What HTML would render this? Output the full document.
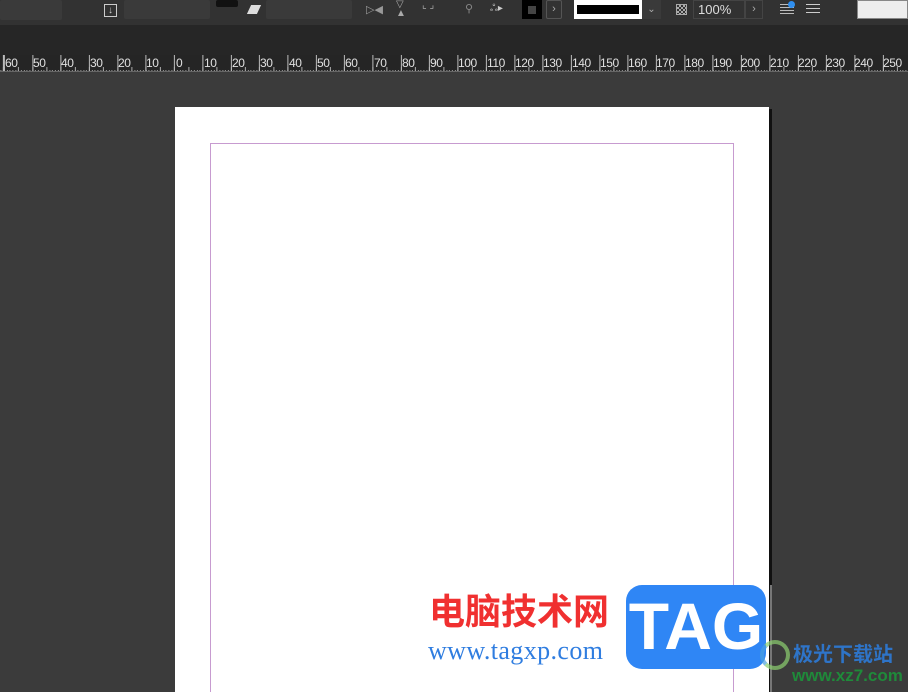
<!DOCTYPE html>
<html style="overflow:hidden;width:908px;height:692px"><head><meta charset="utf-8"><style>
*{margin:0;padding:0;box-sizing:border-box}
body{width:908px;height:692px;overflow:hidden;background:#3b3b3b;font-family:"Liberation Sans",sans-serif;position:relative}
.tb{position:absolute;left:0;top:0;width:908px;height:25px;background:#323232}
.band{position:absolute;left:0;top:25px;width:908px;height:30px;background:#262626}
.ruler{position:absolute;left:0;top:55px;width:908px;height:17px;background:#252525;border-bottom:1px solid #666;
background-image:
repeating-linear-gradient(90deg,#bbb 0 1px,transparent 1px 28.35px),
repeating-linear-gradient(90deg,#aaa 0 1px,transparent 1px 14.175px),
repeating-linear-gradient(90deg,#999 0 1px,transparent 1px 2.835px);
background-size:100% 17px,100% 5px,100% 2px;background-position:3.9px 0,3.9px 12px,3.9px 15px;background-repeat:repeat-x}
.ruler span{position:absolute;top:1px;font-size:12px;color:#e0e0e0;letter-spacing:-0.4px}
.c{position:absolute;background:#3a3a3a;border-radius:2px}
.page{position:absolute;left:175px;top:107px;width:594px;height:585px;background:#fff}
.sh{position:absolute;left:769px;top:109px;width:3px;height:583px;background:#111}
.m{position:absolute;left:210px;top:143px;width:524px;height:549px;border:1px solid #c79bd0;border-bottom:none}
</style></head><body>
<div class="tb">
<div class="c" style="left:0;top:0;width:62px;height:20px;background:#3a3a3a"></div>
<div style="position:absolute;left:104px;top:4px;width:13px;height:13px;border:1px solid #ccc;color:#ccc;font-size:10px;line-height:11px;text-align:center">↓</div>
<div class="c" style="left:124px;top:0;width:86px;height:19px"></div>
<div class="c" style="left:216px;top:0;width:22px;height:7px;background:#111"></div>
<div style="position:absolute;left:249px;top:5px;width:10px;height:9px;background:#ddd;transform:skewX(-25deg)"></div>
<div class="c" style="left:266px;top:0;width:86px;height:19px"></div>
<div style="position:absolute;left:366px;top:3px;color:#999;font-size:11px">▷◀</div>
<div style="position:absolute;left:396px;top:0px;color:#aaa;font-size:10px;line-height:9px">▽<br>▲</div>
<div style="position:absolute;left:422px;top:0;color:#aaa;font-size:10px">⌞ ⌟</div>
<div style="position:absolute;left:465px;top:2px;color:#888;font-size:11px">⚲</div>
<div style="position:absolute;left:490px;top:3px;color:#ccc;font-size:10px">ஃ▸</div>
<div style="position:absolute;left:522px;top:0;width:20px;height:19px;background:#000"><div style="margin:6px;width:8px;height:8px;background:#444"></div></div>
<div style="position:absolute;left:546px;top:0;width:16px;height:19px;border:1px solid #555;border-radius:2px;color:#aaa;font-size:11px;text-align:center;line-height:17px">›</div>
<div style="position:absolute;left:574px;top:0;width:68px;height:19px;background:#fff"><div style="margin:5px 3px;height:9px;background:#000"></div></div>
<div style="position:absolute;left:642px;top:0;width:19px;height:19px;background:#3a3a3a;color:#aaa;font-size:10px;text-align:center;line-height:19px">⌄</div>
<div style="position:absolute;left:676px;top:4px;width:11px;height:11px;border:1px solid #aaa;background:repeating-conic-gradient(#aaa 0 25%,#333 0 50%) 0 0/4px 4px"></div>
<div style="position:absolute;left:693px;top:0;width:52px;height:19px;border:1px solid #444;color:#ddd;font-size:13px;line-height:18px;padding-left:4px">100%</div>
<div style="position:absolute;left:745px;top:0;width:18px;height:19px;border:1px solid #444;color:#aaa;font-size:11px;text-align:center;line-height:17px">›</div>
<div style="position:absolute;left:780px;top:4px;width:14px;height:10px;background:repeating-linear-gradient(#bbb 0 1px,transparent 1px 3px)"></div>
<div style="position:absolute;left:788px;top:1px;width:7px;height:7px;border-radius:50%;background:#2f8ff0"></div>
<div style="position:absolute;left:806px;top:4px;width:14px;height:11px;background:repeating-linear-gradient(#ccc 0 1px,transparent 1px 4px)"></div>
<div style="position:absolute;left:857px;top:0;width:51px;height:19px;background:#eee;border:1px solid #888"></div>
</div>
<div class="band"></div>
<div class="ruler">
<span style="left:5px">60</span><span style="left:33px">50</span><span style="left:61px">40</span><span style="left:90px">30</span><span style="left:118px">20</span><span style="left:146px">10</span><span style="left:176px">0</span><span style="left:204px">10</span><span style="left:232px">20</span><span style="left:260px">30</span><span style="left:289px">40</span><span style="left:317px">50</span><span style="left:345px">60</span><span style="left:374px">70</span><span style="left:402px">80</span><span style="left:430px">90</span><span style="left:458px">100</span><span style="left:487px">110</span><span style="left:515px">120</span><span style="left:543px">130</span><span style="left:572px">140</span><span style="left:600px">150</span><span style="left:628px">160</span><span style="left:656px">170</span><span style="left:685px">180</span><span style="left:713px">190</span><span style="left:741px">200</span><span style="left:770px">210</span><span style="left:798px">220</span><span style="left:826px">230</span><span style="left:854px">240</span><span style="left:883px">250</span>
</div>
<div class="page"></div>
<div class="sh"></div>
<div class="m"></div>
<div style="position:absolute;left:429px;top:588px;color:#f03030;font-size:36px;font-weight:bold;font-family:'Noto Sans CJK SC',sans-serif;line-height:42px">电脑技术网</div>
<div style="position:absolute;left:428px;top:636px;color:#2f7de0;font-size:26px;font-family:'Liberation Serif',serif;line-height:30px;letter-spacing:0.4px">www.tagxp.com</div>
<div style="position:absolute;left:626px;top:585px;width:140px;height:84px;background:#2f86f5;border-radius:16px;color:#fff;font-size:66px;font-weight:bold;text-align:center;line-height:82px">TAG</div>
<div style="position:absolute;left:770px;top:585px;width:2px;height:107px;background:#777"></div>
<div style="position:absolute;left:760px;top:640px;width:30px;height:30px;border-radius:50%;border:4px solid #8dd070;border-left-color:#4aa0e0;opacity:.7"></div>
<div style="position:absolute;left:793px;top:640px;color:#2e74c8;font-size:20px;font-weight:bold;font-family:'Noto Sans CJK SC',sans-serif;line-height:26px">极光下载站</div>
<div style="position:absolute;left:792px;top:666px;color:#1f8a3a;font-size:17px;font-weight:bold;line-height:20px">www.xz7.com</div>
</body></html>
